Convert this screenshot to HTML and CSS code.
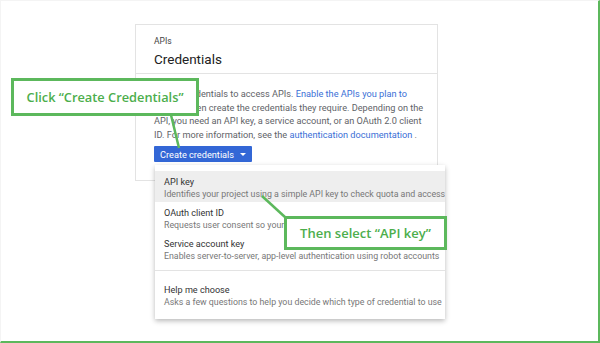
FILE: index.html
```html
<!DOCTYPE html>
<html>
<head>
<meta charset="utf-8">
<link rel="stylesheet" href="styles.css">
</head>
<body>
<div class="stage">
  <div class="card">
    <div class="card-head">
      <div class="crumb">APIs</div>
      <div class="title">Credentials</div>
    </div>
    <div class="card-body">
      <p class="intro">Create credentials to access APIs. <a>Enable the APIs you plan to<br>use</a> and then create the credentials they require. Depending on the<br>API, you need an API key, a service account, or an OAuth 2.0 client<br>ID. For more information, see the <a>authentication documentation</a> .</p>
      <button class="btn">Create credentials <span class="caret"></span></button>
    </div>
  </div>

  <div class="menu">
    <div class="item active">
      <div class="it-title">API key</div>
      <div class="it-desc">Identifies your project using a simple API key to check quota and access</div>
    </div>
    <div class="item">
      <div class="it-title">OAuth client ID</div>
      <div class="it-desc">Requests user consent so your app can access the user's data</div>
    </div>
    <div class="item">
      <div class="it-title">Service account key</div>
      <div class="it-desc">Enables server-to-server, app-level authentication using robot accounts</div>
    </div>
    <div class="sep"></div>
    <div class="item">
      <div class="it-title">Help me choose</div>
      <div class="it-desc">Asks a few questions to help you decide which type of credential to use</div>
    </div>
  </div>

  <svg class="lines" width="600" height="343" viewBox="0 0 600 343">
    <line x1="170" y1="114" x2="178" y2="147" stroke="#5cb85c" stroke-width="2.5"/>
    <line x1="261" y1="195" x2="285" y2="217" stroke="#5cb85c" stroke-width="2.5"/>
  </svg>

  <div class="callout c1">Click “Create Credentials”</div>
  <div class="callout c2">Then select “API key”</div>
</div>
</body>
</html>
```

FILE: styles.css
```css
* { box-sizing: border-box; }
html, body { margin: 0; padding: 0; background: #fff; }
.stage {
  position: relative;
  width: 600px;
  height: 343px;
  border-right: 2px solid #5cb85c;
  border-bottom: 2px solid #5cb85c;
  border-top: 1px solid #f4f4f4;
  border-left: 1px solid #f4f4f4;
  padding: 23px 0 0 134px;
  font-family: Roboto, "Liberation Sans", Arial, sans-serif;
  overflow: hidden;
}
.card {
  width: 303px;
  height: 157px;
  border: 1px solid #e3e3e3;
  background: #fff;
}
.card-head {
  padding: 10px 18px 0;
  height: 49px;
  border-bottom: 1px solid #e3e3e3;
}
.crumb { font-size: 8.5px; color: #444; line-height: 12px; }
.title { font-size: 13.5px; color: #222; line-height: 18px; margin-top: 3px; }
.card-body { padding: 13px 18px 0; }
.intro {
  margin: 0;
  font-size: 9.2px;
  line-height: 13.5px;
  color: #5f6368;
  width: 275px;
}
.intro a { color: #3b6fd6; }
.btn {
  margin-top: 5px;
  display: flex;
  align-items: center;
  gap: 6px;
  height: 16px;
  padding: 0 6px 0 6px;
  border: none;
  border-radius: 1px;
  background: #3367d6;
  color: #fff;
  font-family: Roboto, "Liberation Sans", Arial, sans-serif;
  font-size: 9.2px;
}
.caret {
  width: 0; height: 0;
  border-left: 3px solid transparent;
  border-right: 3px solid transparent;
  border-top: 3px solid #fff;
}
.menu {
  position: absolute;
  left: 154px;
  top: 164px;
  width: 290px;
  padding: 6px 0 9px;
  background: #fff;
  box-shadow: 0 2px 5px rgba(0,0,0,0.28);
  overflow: hidden;
}
.item { padding: 5px 9px 0; height: 31px; white-space: nowrap; }
.item.active { background: #eeeeee; }
.it-title { font-size: 9.1px; color: #333; line-height: 12px; }
.it-desc { font-size: 8.8px; color: #777; line-height: 12px; }
.sep { height: 1px; background: #e3e3e3; margin: 6px 0 8px; }
.lines { position: absolute; left: 0; top: 0; }
.callout {
  position: absolute;
  background: #fff;
  border: 3px solid #5cb85c;
  color: #4cae4c;
  font-family: "Open Sans", "Noto Sans", sans-serif;
  font-weight: 600;
  display: flex;
  align-items: center;
  justify-content: center;
  white-space: nowrap;
}
.c1 { left: 10px; top: 77px; width: 188px; height: 38px; font-size: 12.8px; }
.c2 { left: 283px; top: 215px; width: 163px; height: 34px; font-size: 13px; }
```
